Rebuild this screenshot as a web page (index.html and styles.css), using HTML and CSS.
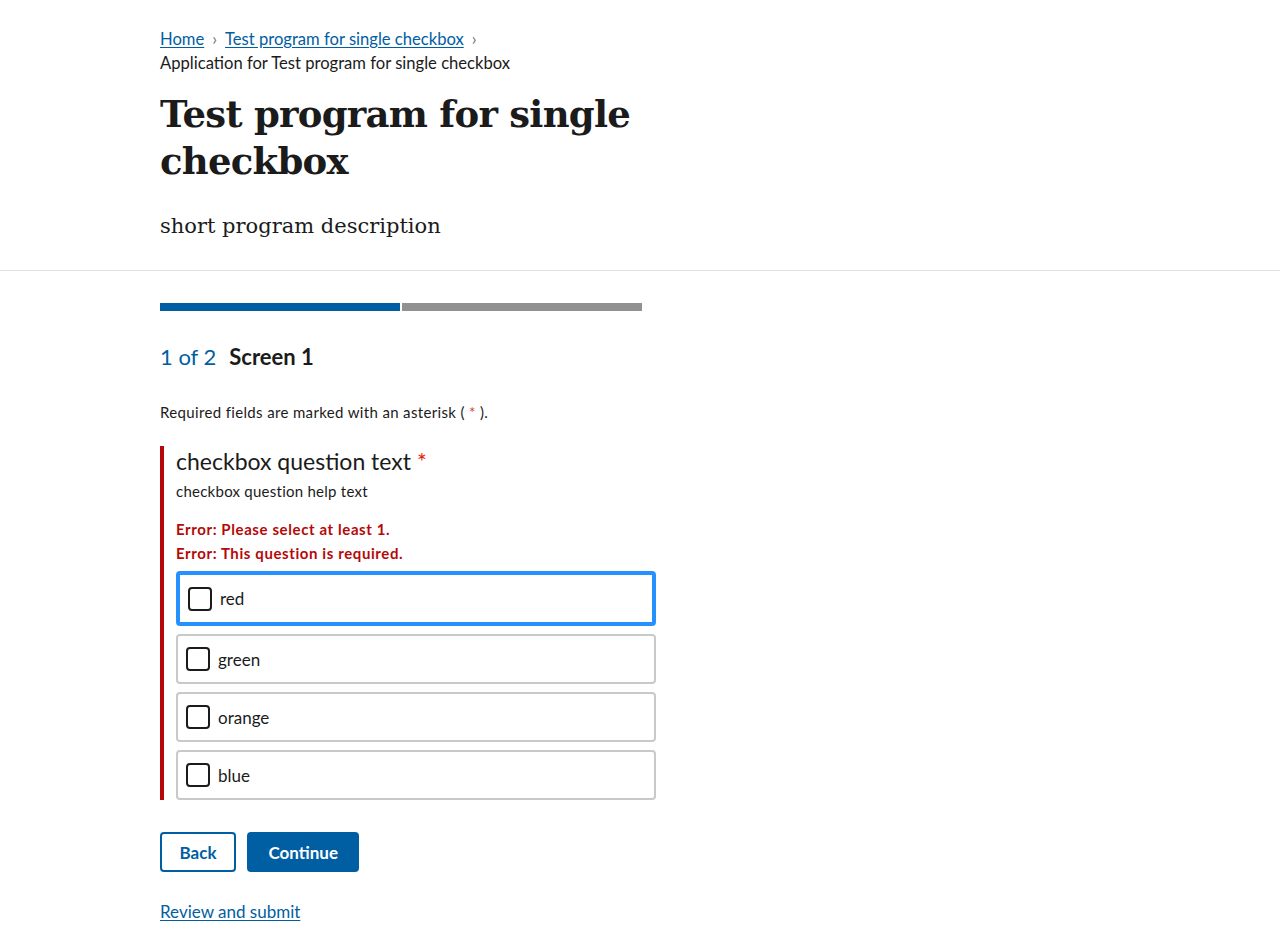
FILE: index.html
```html
<!DOCTYPE html>
<html lang="en">
<head>
<meta charset="utf-8">
<title>Test program for single checkbox</title>
<link rel="stylesheet" href="styles.css">
</head>
<body>
<header class="program-header">
  <div class="container">
    <nav class="breadcrumb" aria-label="Breadcrumbs">
      <ol class="crumbs">
        <li class="crumb"><a href="#">Home</a><span class="sep">›</span></li>
        <li class="crumb"><a href="#">Test program for single checkbox</a><span class="sep">›</span></li>
        <li class="crumb current">Application for Test program for single checkbox</li>
      </ol>
    </nav>
    <h1 class="title">Test program for single checkbox</h1>
    <p class="description">short program description</p>
  </div>
</header>
<main class="container main">
  <div class="progress">
    <div class="seg done"></div>
    <div class="seg todo"></div>
  </div>
  <h2 class="step"><span class="count">1 of 2</span><span class="screen">Screen 1</span></h2>
  <p class="required-note">Required fields are marked with an asterisk ( <span class="ast">*</span> ).</p>
  <fieldset class="question error">
    <legend class="q-text">checkbox question text <span class="ast big">*</span></legend>
    <p class="help">checkbox question help text</p>
    <p class="err-msg">Error: Please select at least 1.</p>
    <p class="err-msg">Error: This question is required.</p>
    <div class="options">
      <label class="option focused"><span class="box"></span><span class="opt-label">red</span></label>
      <label class="option"><span class="box"></span><span class="opt-label">green</span></label>
      <label class="option"><span class="box"></span><span class="opt-label">orange</span></label>
      <label class="option"><span class="box"></span><span class="opt-label">blue</span></label>
    </div>
  </fieldset>
  <div class="actions">
    <button class="btn outline">Back</button>
    <button class="btn solid">Continue</button>
  </div>
  <a class="review" href="#">Review and submit</a>
</main>
</body>
</html>
```
FILE: styles.css
```css
* { box-sizing: border-box; }
html, body { margin: 0; padding: 0; background: #fff; }
body {
  font-family: "Lato", "Liberation Sans", sans-serif;
  color: #1b1b1b;
  font-size: 17px;
}
a { color: #005ea2; text-decoration: underline; text-underline-offset: 2px; }
.container { padding-left: 160px; }
.program-header { border-bottom: 1px solid #dfe1e2; padding-top: 27px; padding-bottom: 28px; }
.crumbs { list-style: none; margin: 0; padding: 0; display: flex; flex-wrap: wrap; width: 400px; line-height: 24px; font-size: 16.6px; }
.crumb { display: flex; align-items: center; }
.sep { color: #71767a; margin: 0 8px; font-size: 17px; }
.current { width: 100%; }
.title {
  font-family: "DejaVu Serif", "Liberation Serif", serif;
  font-weight: bold;
  font-size: 37px;
  line-height: 47px;
  margin: 16px 0 0;
  width: 640px;
  letter-spacing: -0.75px;
}
.description {
  font-family: "DejaVu Serif", "Liberation Serif", serif;
  font-size: 21px;
  line-height: 32px;
  margin: 25px 0 0;
}
.main { padding-top: 32px; padding-bottom: 30px; }
.progress { display: flex; gap: 2px; width: 482px; }
.seg { height: 8px; flex: 1; }
.done { background: #005ea2; }
.todo { background: #919191; }
.step { margin: 31px 0 0; font-size: 22px; line-height: 30px; display: flex; gap: 13px; }
.count { color: #005ea2; font-weight: normal; }
.screen { font-weight: bold; }
.required-note { margin: 28px 0 0; font-size: 15px; line-height: 24px; letter-spacing: 0.35px; }
.ast { color: #d83933; }
.question {
  margin: 22px 0 0;
  padding: 0 0 0 12px;
  border: none;
  border-left: 4px solid #b50909;
  width: 496px;
}
.q-text { font-size: 23px; line-height: 30px; padding: 0; float: left; width: 100%; margin-top: 0; }
.q-text + * { clear: both; }
.big { color: #e52207; }
.help { margin: 0; font-size: 15px; line-height: 22px; padding-top: 4px; letter-spacing: 0.25px; }
.err-msg { margin: 0; color: #b50909; font-weight: bold; font-size: 15px; line-height: 24px; letter-spacing: 0.6px; }
.help + .err-msg { margin-top: 15px; }
.options { display: flex; flex-direction: column; gap: 8px; margin-top: 6px; width: 480px; }
.option {
  display: flex; align-items: center; gap: 8px;
  height: 50px;
  border: 2px solid #c9c9c9;
  border-radius: 4px;
  padding-left: 8px;
  flex: none;
}
.option.focused { height: 55px; border: 4px solid #2491ff; }
.box { width: 24px; height: 24px; border: 2px solid #1b1b1b; border-radius: 4px; flex: none; }
.opt-label { font-size: 17px; }
.actions { display: flex; gap: 11px; margin-top: 32px; }
.btn {
  font-family: inherit; font-weight: bold; font-size: 17px;
  height: 40px; border-radius: 4px; cursor: pointer;
}
.outline { background: #fff; color: #005ea2; border: 2px solid #005ea2; padding: 0 17.5px; }
.solid { background: #005ea2; color: #fff; border: 2px solid #005ea2; padding: 0 19.5px; }
.review { display: inline-block; margin-top: 28px; font-size: 17px; line-height: 24px; }
```
